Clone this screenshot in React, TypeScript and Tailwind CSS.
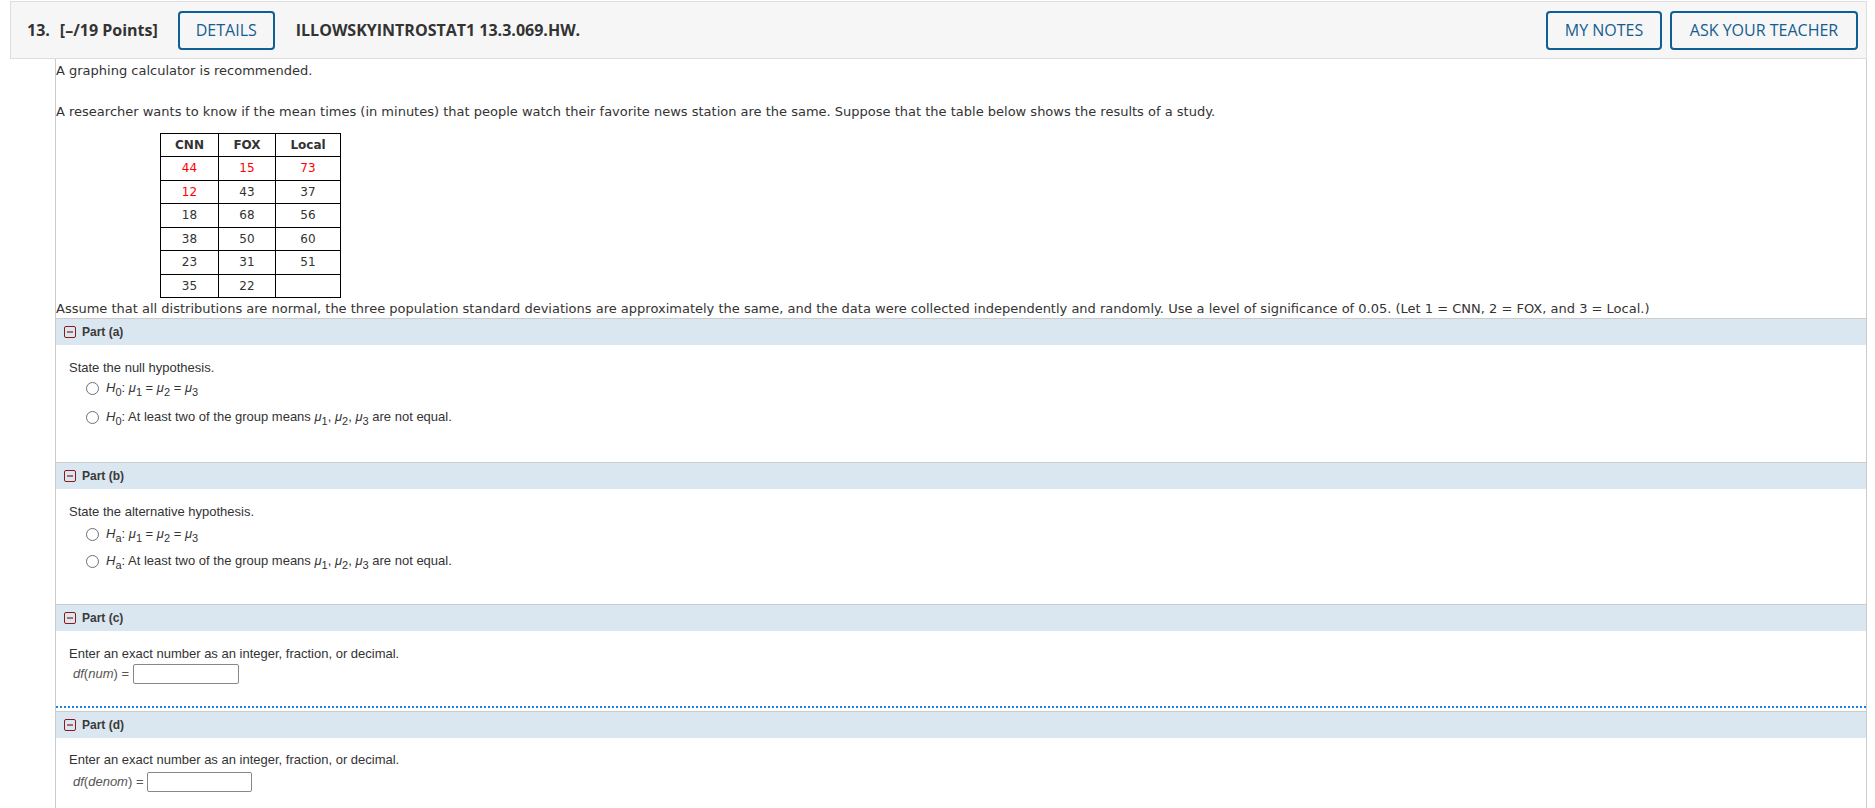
import React from "react";

const body = "font-['Liberation_Sans',Arial,sans-serif] text-[13px] text-[#333]";

const tableRows: { v: string; red?: boolean }[][] = [
  [{ v: "44", red: true }, { v: "15", red: true }, { v: "73", red: true }],
  [{ v: "12", red: true }, { v: "43" }, { v: "37" }],
  [{ v: "18" }, { v: "68" }, { v: "56" }],
  [{ v: "38" }, { v: "50" }, { v: "60" }],
  [{ v: "23" }, { v: "31" }, { v: "51" }],
  [{ v: "35" }, { v: "22" }, { v: "" }],
];

const HeaderButton = ({ label, width }: { label: string; width: string }) => (
  <button
    className={`h-[39px] ${width} border-2 border-[#0e5f94] rounded-[4px] text-[16px] font-medium text-[#155d90] font-['Open_Sans',sans-serif] flex items-center justify-center bg-transparent`}
  >
    {label}
  </button>
);

const MinusBox = () => (
  <svg width="12" height="12" viewBox="0 0 12 12">
    <rect x="0.5" y="0.5" width="11" height="11" rx="1.5" fill="none" stroke="#8a1a1a" />
    <line x1="3" y1="6" x2="9" y2="6" stroke="#8a1a1a" strokeWidth="1.2" />
  </svg>
);

const PartHeader = ({ label }: { label: string }) => (
  <div className="h-[27px] border-t border-[#cccccc] bg-[#dae6f0] flex items-center pl-[8px] gap-[6px]">
    <MinusBox />
    <span className="font-['Liberation_Sans',Arial,sans-serif] text-[12px] font-bold text-[#3a3a3a]">
      {label}
    </span>
  </div>
);

const Radio = () => (
  <span className="w-[13px] h-[13px] rounded-full border border-[#707070] bg-white shrink-0" />
);

const Sub = ({ children }: { children: React.ReactNode }) => (
  <sub className="text-[11px] bottom-[-0.4em]">{children}</sub>
);

const Mu = ({ n }: { n: string }) => (
  <>
    <i>μ</i>
    <Sub>{n}</Sub>
  </>
);

const HypothesisPart = ({
  label,
  title,
  sub,
  gap1,
  gap2,
  height,
}: {
  label: string;
  title: string;
  sub: string;
  gap1: string;
  gap2: string;
  height: string;
}) => (
  <div>
    <PartHeader label={label} />
    <div className={`${height} ${body} pt-[15px] leading-[16px]`}>
      <div className="pl-[13px]">{title}</div>
      <div className={`${gap1} pl-[30px] flex items-center gap-[7px]`}>
        <Radio />
        <span>
          <i>H</i>
          <Sub>{sub}</Sub>: <Mu n="1" /> = <Mu n="2" /> = <Mu n="3" />
        </span>
      </div>
      <div className={`${gap2} pl-[30px] flex items-center gap-[7px]`}>
        <Radio />
        <span>
          <i>H</i>
          <Sub>{sub}</Sub>: At least two of the group means <Mu n="1" />, <Mu n="2" />, <Mu n="3" /> are not equal.
        </span>
      </div>
    </div>
  </div>
);

export default function App() {
  return (
    <div className="w-[1875px] min-h-[808px] bg-white">
      {/* question header */}
      <div className="ml-[10px] w-[1857px] mt-px h-[58px] border border-[#dddddd] bg-[#f6f6f6] flex items-center pl-[16px] pr-[8px] font-['Open_Sans',sans-serif] text-[#333]">
        <span className="text-[16px] font-bold">13.</span>
        <span className="ml-[10px] text-[16px] font-bold">[–/19 Points]</span>
        <div className="ml-[20px]">
          <HeaderButton label="DETAILS" width="w-[97px]" />
        </div>
        <span className="ml-[21px] text-[16px] font-bold">ILLOWSKYINTROSTAT1 13.3.069.HW.</span>
        <div className="ml-auto flex gap-[8px]">
          <HeaderButton label="MY NOTES" width="w-[116px]" />
          <HeaderButton label="ASK YOUR TEACHER" width="w-[188px]" />
        </div>
      </div>

      {/* question body */}
      <div className="ml-[55px] w-[1812px] border-l border-r border-[#cccccc] pb-[20px]">
        <div className="font-['DejaVu_Sans',Verdana,sans-serif] text-[13px] leading-[18px] text-[#333] pt-[3px]">
          <div>A graphing calculator is recommended.</div>
          <div className="mt-[23px]">
            A researcher wants to know if the mean times (in minutes) that people watch their favorite news station are the same. Suppose that the table below shows the results of a study.
          </div>
          <table className="ml-[104px] mt-[12px] border-collapse font-['DejaVu_Sans',Verdana,sans-serif] text-[12px] text-[#333]">
            <thead>
              <tr className="h-[23px]">
                <th className="w-[58px] border border-black font-bold">CNN</th>
                <th className="w-[57px] border border-black font-bold">FOX</th>
                <th className="w-[65px] border border-black font-bold">Local</th>
              </tr>
            </thead>
            <tbody>
              {tableRows.map((row, i) => (
                <tr key={i} className="h-[23.5px]">
                  {row.map((c, j) => (
                    <td
                      key={j}
                      className={`border border-black text-center p-0 ${c.red ? "text-[#ff0000]" : ""}`}
                    >
                      {c.v}
                    </td>
                  ))}
                </tr>
              ))}
            </tbody>
          </table>
          <div className="mt-[2px]">
            Assume that all distributions are normal, the three population standard deviations are approximately the same, and the data were collected independently and randomly. Use a level of significance of 0.05. (Let 1 = CNN, 2 = FOX, and 3 = Local.)
          </div>
        </div>

        <HypothesisPart
          label="Part (a)"
          title="State the null hypothesis."
          sub="0"
          gap1="mt-[4px]"
          gap2="mt-[13px]"
          height="h-[117px]"
        />
        <HypothesisPart
          label="Part (b)"
          title="State the alternative hypothesis."
          sub="a"
          gap1="mt-[6px]"
          gap2="mt-[11px]"
          height="h-[115px]"
        />

        <div className="border-b-2 border-dotted border-[#1b7fe3] mb-[3px]">
          <PartHeader label="Part (c)" />
          <div className={`h-[75px] ${body} pt-[15px] leading-[16px]`}>
            <div className="pl-[13px]">Enter an exact number as an integer, fraction, or decimal.</div>
            <div className="mt-[2px] pl-[17px] flex items-center h-[20px] text-[#555]">
              <span>
                <i>df</i>(<i>num</i>) =
              </span>
              <input className="ml-[4px] w-[106px] h-[20px] border border-[#888] rounded-[2px] bg-white" />
            </div>
          </div>
        </div>

        <div>
          <PartHeader label="Part (d)" />
          <div className={`${body} pt-[14px] leading-[16px]`}>
            <div className="pl-[13px]">Enter an exact number as an integer, fraction, or decimal.</div>
            <div className="mt-[4px] pl-[17px] flex items-center h-[20px] text-[#555]">
              <span>
                <i>df</i>(<i>denom</i>) =
              </span>
              <input className="ml-[4px] w-[105px] h-[20px] border border-[#888] rounded-[2px] bg-white" />
            </div>
          </div>
        </div>
      </div>
    </div>
  );
}
